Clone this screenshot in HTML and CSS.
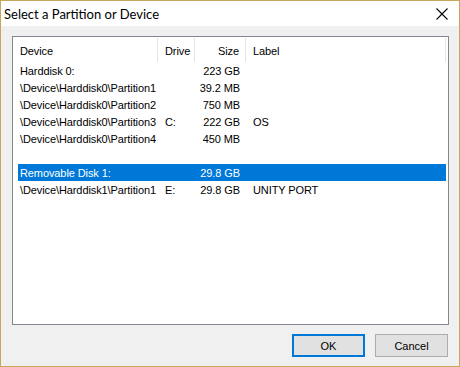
FILE: index.html
```html
<!DOCTYPE html>
<html lang="en">
<head>
    <meta charset="UTF-8">
    <title>Select a Partition or Device</title>
    <link rel="stylesheet" href="styles.css">
</head>
<body>
    <div class="dialog">
        <div class="titlebar">
            <span class="title">Select a Partition or Device</span>
            <span class="close">
                <svg width="12" height="12" viewBox="0 0 12 12">
                    <path d="M0.5 0.5L11.5 11.5M11.5 0.5L0.5 11.5" stroke="#000" stroke-width="1.1" fill="none"/>
                </svg>
            </span>
        </div>
        <div class="content">
            <div class="listbox">
                <div class="header">
                    <div class="col c-dev">Device</div>
                    <div class="col c-drv">Drive</div>
                    <div class="col c-size">Size</div>
                    <div class="col c-lbl">Label</div>
                </div>
                <div class="rows">
                    <div class="row">
                        <div class="c-dev">Harddisk 0:</div>
                        <div class="c-drv"></div>
                        <div class="c-size">223 GB</div>
                        <div class="c-lbl"></div>
                    </div>
                    <div class="row">
                        <div class="c-dev">\Device\Harddisk0\Partition1</div>
                        <div class="c-drv"></div>
                        <div class="c-size">39.2 MB</div>
                        <div class="c-lbl"></div>
                    </div>
                    <div class="row">
                        <div class="c-dev">\Device\Harddisk0\Partition2</div>
                        <div class="c-drv"></div>
                        <div class="c-size">750 MB</div>
                        <div class="c-lbl"></div>
                    </div>
                    <div class="row">
                        <div class="c-dev">\Device\Harddisk0\Partition3</div>
                        <div class="c-drv">C:</div>
                        <div class="c-size">222 GB</div>
                        <div class="c-lbl">OS</div>
                    </div>
                    <div class="row">
                        <div class="c-dev">\Device\Harddisk0\Partition4</div>
                        <div class="c-drv"></div>
                        <div class="c-size">450 MB</div>
                        <div class="c-lbl"></div>
                    </div>
                    <div class="row"></div>
                    <div class="row selected">
                        <div class="c-dev">Removable Disk 1:</div>
                        <div class="c-drv"></div>
                        <div class="c-size">29.8 GB</div>
                        <div class="c-lbl"></div>
                    </div>
                    <div class="row">
                        <div class="c-dev">\Device\Harddisk1\Partition1</div>
                        <div class="c-drv">E:</div>
                        <div class="c-size">29.8 GB</div>
                        <div class="c-lbl">UNITY PORT</div>
                    </div>
                </div>
            </div>
            <div class="buttons">
                <button class="btn default">OK</button>
                <button class="btn">Cancel</button>
            </div>
        </div>
    </div>
</body>
</html>
```

FILE: styles.css
```css
*{
    margin: 0;
    padding: 0;
    box-sizing: border-box;
}
body{
    font-family: "Liberation Sans", Arial, sans-serif;
    font-size: 11px;
    letter-spacing: -0.1px;
    color: #000;
    background: #f0f0f0;
}
.dialog{
    width: 460px;
    height: 367px;
    border: 1px solid #c8a65a;
    background: #f0f0f0;
    display: flex;
    flex-direction: column;
}
.titlebar{
    height: 25px;
    background: #fff;
    display: flex;
    align-items: center;
    justify-content: space-between;
    padding-left: 3px;
}
.title{
    font-family: Lato, "Liberation Sans", sans-serif;
    font-size: 13px;
    letter-spacing: 0;
}
.close{
    width: 46px;
    height: 25px;
    display: flex;
    align-items: center;
    justify-content: center;
    margin-right: -6px;
}
.content{
    flex: 1;
    display: flex;
    flex-direction: column;
    padding: 10px 10px 8px 11px;
}
.listbox{
    height: 289px;
    border: 1px solid #828790;
    background: #fff;
}
.header{
    height: 25px;
    display: flex;
    padding-left: 5px;
    padding-top: 1px;
}
.header .col{
    display: flex;
    align-items: center;
    padding-top: 2px;
    border-right: 1px solid #e5e5e5;
    height: 24px;
}
.header .c-dev{
    padding-left: 2px;
}
.rows .row{
    height: 17px;
    display: flex;
    align-items: center;
    padding-top: 1px;
    margin-left: 5px;
    width: 428px;
    white-space: nowrap;
}
.c-dev{
    width: 140px;
    padding-left: 2px;
}
.c-drv{
    width: 37px;
    padding-left: 7px;
}
.c-size{
    width: 51px;
    text-align: right;
    padding-right: 6px;
    justify-content: flex-end;
}
.c-lbl{
    width: 200px;
    padding-left: 7px;
}
.row.selected{
    background: #0078d7;
    color: #fff;
}
.buttons{
    margin-top: 9px;
    display: flex;
    justify-content: flex-end;
    gap: 10px;
    padding-right: 1px;
}
.btn{
    width: 73px;
    height: 23px;
    font-family: inherit;
    font-size: 11px;
    letter-spacing: 0;
    color: #000;
    background: #e1e1e1;
    border: 1px solid #adadad;
}
.btn.default{
    border: 2px solid #0078d7;
}
```
